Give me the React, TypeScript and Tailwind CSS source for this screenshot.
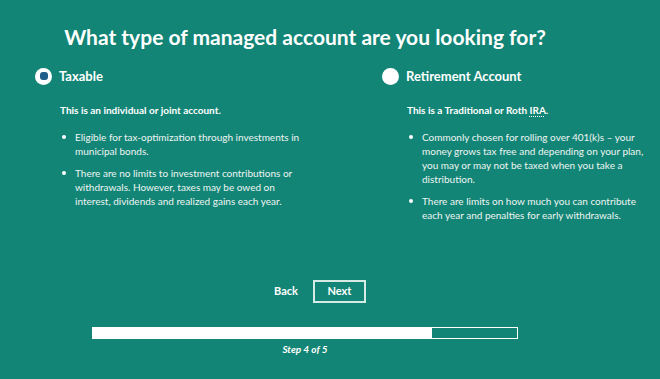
import React from "react";

function Radio({ checked }: { checked: boolean }) {
  return checked ? (
    <span className="flex h-[17px] w-[17px] shrink-0 items-center justify-center rounded-full bg-white">
      <span className="h-[8px] w-[8px] rounded-[3px] bg-[#1e5e8a]" />
    </span>
  ) : (
    <span className="h-[17px] w-[17px] shrink-0 rounded-full bg-white" />
  );
}

type Item = { text: string; w: string };

function Option({
  label,
  checked,
  desc,
  items,
}: {
  label: string;
  checked: boolean;
  desc: React.ReactNode;
  items: Item[];
}) {
  return (
    <div className="flex w-[347px] shrink-0 flex-col">
      <div className="flex h-[20px] items-center gap-[7px]">
        <Radio checked={checked} />
        <span className="text-[13px] font-bold leading-none">{label}</span>
      </div>
      <div className="pl-[25px] pt-[17px]">
        <p className="text-[10px] font-bold leading-[14px]">{desc}</p>
        <ul className="mt-[13px] flex flex-col gap-[8px] pl-[15px]">
          {items.map((t) => (
            <li key={t.text} className={`relative text-[10px] leading-[14px] text-[#eef5f3] ${t.w}`}>
              <span className="absolute left-[-13px] top-[5px] h-[4px] w-[4px] rounded-full bg-white" />
              {t.text}
            </li>
          ))}
        </ul>
      </div>
    </div>
  );
}

export default function App() {
  return (
    <div
      className="relative h-[379px] w-[660px] overflow-hidden bg-[#138576] text-white"
      style={{ fontFamily: "Lato, 'Open Sans', sans-serif" }}
    >
      <h1 className="w-[610px] pt-[22px] text-center text-[21px] font-bold leading-[30px]">
        What type of managed account are you looking for?
      </h1>
      <div className="mt-[14px] flex pl-[35px]">
        <Option
          label="Taxable"
          checked
          desc="This is an individual or joint account."
          items={[
            { text: "Eligible for tax-optimization through investments in municipal bonds.", w: "w-[226px]" },
            {
              text: "There are no limits to investment contributions or withdrawals. However, taxes may be owed on interest, dividends and realized gains each year.",
              w: "w-[219px]",
            },
          ]}
        />
        <Option
          label="Retirement Account"
          checked={false}
          desc={
            <>
              This is a Traditional or Roth{" "}
              <abbr className="underline decoration-dotted underline-offset-2">IRA</abbr>.
            </>
          }
          items={[
            {
              text: "Commonly chosen for rolling over 401(k)s – your money grows tax free and depending on your plan, you may or may not be taxed when you take a distribution.",
              w: "w-[224px]",
            },
            {
              text: "There are limits on how much you can contribute each year and penalties for early withdrawals.",
              w: "w-[224px]",
            },
          ]}
        />
      </div>
      <div className="absolute left-0 top-[280px] flex w-[660px] flex-col">
        <div className="flex w-[640px] items-center justify-center gap-[15px]">
          <span className="text-[11px] font-bold">Back</span>
          <span className="flex h-[23px] w-[53px] items-center justify-center border-2 border-[#d6ebe6] text-[11px] font-bold">
            Next
          </span>
        </div>
        <div className="ml-[92px] mt-[24px] flex h-[12px] w-[426px] border-[1.5px] border-white bg-[#138576]">
          <div className="h-full w-[80%] bg-white" />
        </div>
        <div className="w-[610px] pt-[3px] text-center text-[10px] font-bold italic leading-[14px]">
          Step 4 of 5
        </div>
      </div>
    </div>
  );
}
